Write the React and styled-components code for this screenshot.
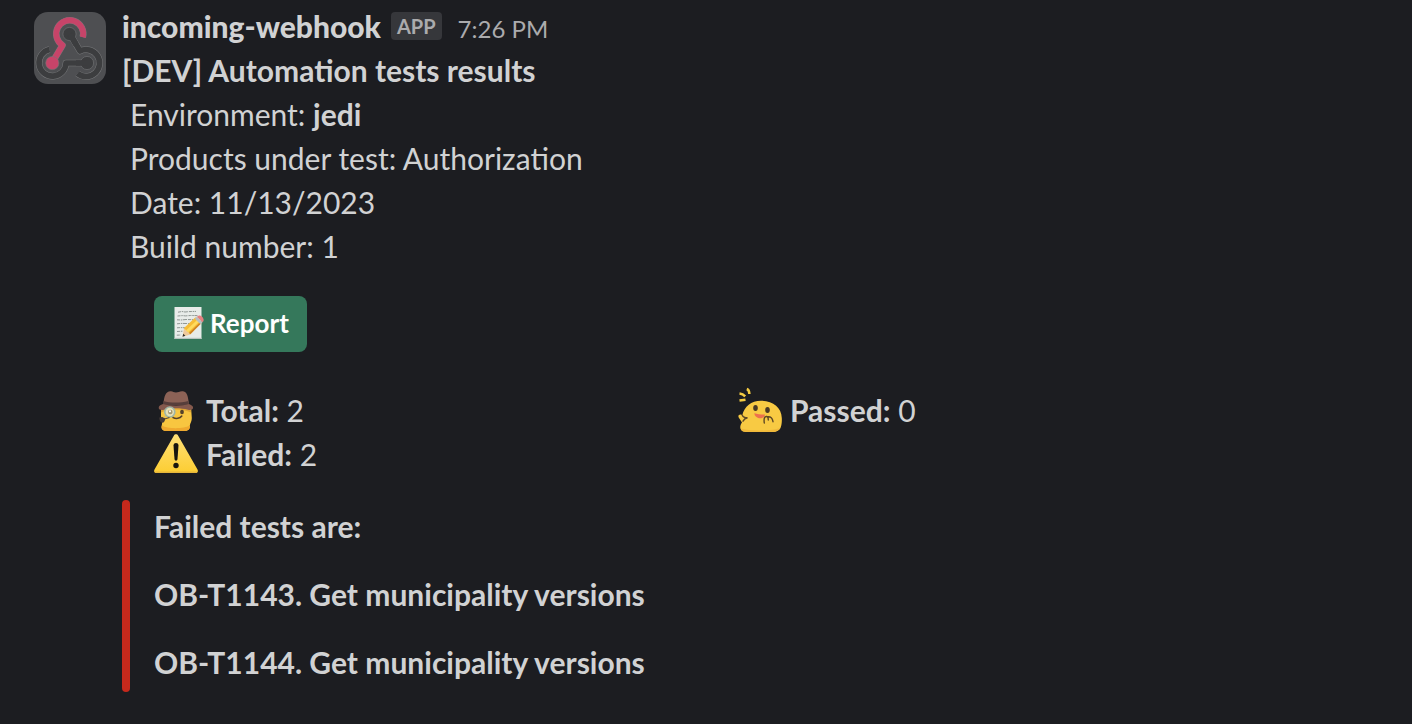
import React from "react";
import styled, { createGlobalStyle } from "styled-components";

const GlobalStyle = createGlobalStyle`
  *, *::before, *::after { box-sizing: border-box; }
  body {
    margin: 0;
    background: #1c1d21;
    color: #d1d2d3;
    font-family: Lato, "Liberation Sans", sans-serif;
    font-size: 30px;
    line-height: 44px;
  }
`;

const Message = styled.article`
  display: flex;
  gap: 16px;
  padding: 4px 40px 32px 34px;
`;

const Avatar = styled.svg`
  flex: none;
  width: 72px;
  height: 72px;
  margin-top: 8px;
`;

const Body = styled.div`
  flex: 1;
  min-width: 0;
`;

const Header = styled.header`
  display: flex;
  align-items: baseline;
  height: 44px;
`;

const Sender = styled.span`
  font-weight: 900;
`;

const AppBadge = styled.span`
  align-self: flex-start;
  margin: 8px 0 0 10px;
  padding: 0 6px;
  border-radius: 4px;
  background: #36373b;
  color: #ababad;
  font-size: 20px;
  font-weight: 700;
  line-height: 28px;
`;

const Time = styled.time`
  margin-left: 16px;
  color: #ababad;
  font-size: 24px;
`;

const Title = styled.h1`
  margin: 0;
  font-size: 30px;
  font-weight: 700;
  line-height: 44px;
`;

const Details = styled.div`
  padding-left: 8px;
`;

const Line = styled.p`
  margin: 0;
`;

const Blocks = styled.div`
  max-width: 1200px;
  padding: 28px 0 0 32px;
`;

const ReportButton = styled.button`
  display: flex;
  align-items: center;
  gap: 6px;
  height: 56px;
  padding: 0 18px 2px;
  border: 0;
  border-radius: 8px;
  background: #35785b;
  color: #fff;
  font: inherit;
  font-size: 26px;
  font-weight: 700;
`;

const MemoIcon = styled.svg`
  width: 32px;
  height: 32px;
`;

const Fields = styled.div`
  display: grid;
  grid-template-columns: 1fr 1fr;
  margin-top: 36px;
`;

const Field = styled.div`
  display: flex;
  gap: 8px;
`;

const Emoji = styled.svg`
  flex: none;
  width: 44px;
  height: 44px;
  margin: 2px 0 -2px;
  overflow: visible;
`;

const Attachment = styled.section`
  display: flex;
  gap: 24px;
  margin-top: 24px;
`;

const Bar = styled.div`
  width: 8px;
  border-radius: 8px;
  background: #c5291c;
`;

const Failures = styled.div`
  display: grid;
  gap: 24px;
  padding: 4px 0 8px;
  font-weight: 700;
`;

const RIGHT_ARM = "M36 22 L46 39 A13.5 13.5 0 1 1 43.5 61.5";
const LEFT_ARM = "M15.5 37.5 A13.5 13.5 0 1 0 32 51 L53 51";
const TOP_ARM = "M48.8 25.2 A13.5 13.5 0 1 0 28.5 33.2 L18 51";

function WebhookAvatar() {
  return (
    <Avatar viewBox="0 0 72 72" role="img" aria-label="incoming-webhook">
      <rect width="72" height="72" rx="14" fill="#4e4f52" />
      <g fill="none" strokeLinejoin="round">
        {[RIGHT_ARM, LEFT_ARM].map((d) => (
          <g key={d}>
            <path d={d} stroke="#77787a" strokeWidth="6.6" />
            <path d={d} stroke="#3c3d3f" strokeWidth="5.6" />
          </g>
        ))}
        <path d={TOP_ARM} stroke="#77787a" strokeWidth="6.6" />
        <path d={TOP_ARM} stroke="#c74469" strokeWidth="5.8" />
      </g>
      <g stroke="#747577" strokeWidth=".6">
        <circle cx="35.5" cy="22" r="6.6" fill="#3c3d3f" />
        <circle cx="53" cy="51" r="6.6" fill="#3c3d3f" />
        <circle cx="18.3" cy="51" r="6.6" fill="#c74469" />
      </g>
      <path d="M36 22 L42 32.5 M42 51 L53 51" stroke="#3c3d3f" strokeWidth="5.6" />
    </Avatar>
  );
}

function Memo() {
  return (
    <MemoIcon viewBox="0 0 32 32" aria-hidden="true">
      <path d="M2.5 0H29.5V32H2.5z" fill="#e8ece9" />
      <path d="M2.5 30.8H29.5V32H2.5z" fill="#b9c5bf" />
      <g fill="none" stroke="#858c89" strokeWidth=".9" strokeDasharray="3 .8 1.6 .6 4 1">
        <path d="M6 5.2l4-.7 3 .5 4-.4 7-.2" />
        <path d="M5.5 9l5-.4 3 .3 5-.4 7 .1" />
        <path d="M5 12.8l4 .2 5-.5 8 .2" />
        <path d="M5 16.8l5-.4 8 .2" />
        <path d="M5 20.8l4-.2 5 .2" />
        <path d="M5 24.5l6-.3M4.8 28.2l4-.2" />
      </g>
      <path d="M10.500 29.800l1.500-8.300 6.500 6z" fill="#efc99a" />
      <path d="M10.500 29.800l.7-3 2.200 2z" fill="#30302e" />
      <path d="M11.800 21.300L23.500 10.300l6 5.700-11.200 11.200z" fill="#f6bd36" />
      <path d="M14 23.400L25.800 12.300l2 2-11.600 11z" fill="#ffdb5c" />
      <path d="M17 26l11.400-11 1.100 1-11.200 11.200z" fill="#cf8322" />
      <path d="M22.800 11.700l2-1.900 5.700 5.500-2 1.900z" fill="#b8bec0" />
      <path d="M24.800 9.800l1.400-.9c2.500-1.500 6.500 2.500 5.200 5.400l-.9 1z" fill="#e48180" />
    </MemoIcon>
  );
}

function Detective() {
  return (
    <Emoji viewBox="0 0 44 44" aria-hidden="true">
      <path d="M7 16h30l.8 12c.2 3-1.600 5-2 7.500.5 3-1.500 5.500-5 5.500H13c-4 0-6.500-2-5.300-5.500C9 32 7 30 7 26z" fill="#f8c640" />
      <path d="M8 35.500c5 3.500 22 3.500 27.800 0 .8 3.200-1.500 5.500-5 5.500H13c-4 0-6-1.700-5-5.500z" fill="#efa92f" />
      <path d="M7 19C13 15.500 31 15.500 37 19v3.500C29 18.500 15 18.500 7 22.500z" fill="#dfa535" />
      <path d="M9.500 14C10 6 12 .8 17 1.300c2 .2 2.800 1.200 5 1.200s4-1.600 7-1.200c4.500.6 5 6 6 12.500z" fill="#8c6256" />
      <path d="M9.300 11c7 2 17 2 25 0l.8 4.500H9z" fill="#573e3b" />
      <path d="M9 14c7 2.300 19 2.300 26 0 3 1.200 4.600 2.800 4 4.200-.5 1.600-2.500 2-5 1.500-7-2-17-2-24 0-3 .7-5.300 0-5.300-2 0-1.500 1.700-2.800 4.300-3.700z" fill="#84594d" />
      <path d="M11.500 25l-2.500 6" stroke="#c9b77c" strokeWidth=".9" />
      <circle cx="15.800" cy="22" r="5" fill="#e5dfb5" stroke="#9fb5a7" strokeWidth="1.600" />
      <circle cx="16.300" cy="22" r="2.300" fill="#a49569" />
      <circle cx="16" cy="21.300" r="1.100" fill="#fff" />
      <ellipse cx="28" cy="22" rx="1.900" ry="2.300" fill="#54422b" />
      <path d="M19 27.500c3 1.700 7 1 8.800-1.500" fill="none" stroke="#54412a" strokeWidth="1.500" strokeLinecap="round" />
      <path d="M15.500 27.500L10.500 29" stroke="#5b4836" strokeWidth="1.200" />
      <path d="M5.300 27.500l3-.4 2.800 1.500c0 2.500-1.100 4.200-2.700 4.200-1.900-.1-3.100-2.200-3.100-5.300z" fill="#443936" />
    </Emoji>
  );
}

function Warning() {
  return (
    <Emoji viewBox="0 0 44 44" aria-hidden="true">
      <defs>
        <linearGradient id="sign" x1="0" y1="0" x2="0" y2="1">
          <stop offset="0" stopColor="#ffe077" />
          <stop offset="1" stopColor="#fccd32" />
        </linearGradient>
      </defs>
      <path d="M19.800 1.700c1-1.800 3.400-1.800 4.400 0L43.500 35.500c1 1.900.2 3.500-2 3.500h-39c-2.200 0-3-1.600-2-3.500z" fill="url(#sign)" />
      <path d="M.5 37.500h43c-.3 1-.9 1.500-2 1.500h-39c-1.100 0-1.700-.5-2-1.500z" fill="#e6b63a" />
      <path d="M19.500 11.500c0-3.300 5-3.300 5 0l-1 13.500c-.2 2.200-2.800 2.200-3 0z" fill="#17150e" />
      <circle cx="22" cy="31.500" r="2.700" fill="#17150e" />
    </Emoji>
  );
}

function Cheering() {
  return (
    <Emoji viewBox="0 2 44 44" aria-hidden="true">
      <path d="M3 41.500c-1.500-2-.5-5 1-7L.7 29.500C-.5 27 2 25.500 4.300 27 6.500 18.500 13 12.800 23 12.800c12-.2 20.500 7 20.800 17.200.2 4-.2 7-1.300 10-1 2.300-4 4-8 4H9c-3 0-5-.8-6-2.500z" fill="#f8ca43" />
      <path d="M2.800 40.500c9 2.800 30 2.600 39.500-.5-1.300 2.700-4.300 4-7.800 4H9c-3.500 0-6-.8-6.200-3.500z" fill="#f0b93b" />
      <ellipse cx="17.500" cy="20" rx="2.300" ry="2.900" fill="#493925" />
      <ellipse cx="29.500" cy="22" rx="2.300" ry="2.900" fill="#493925" />
      <path d="M16.300 25.300c3.500 1 7 1.300 10.700 1.200-.4 3-3 4.300-6 3.700-2.500-.5-4.400-2-4.700-4.900z" fill="#ed704d" />
      <path d="M26.300 35c-.7-4.500.3-7 2.500-6.500 1.500.4 1.500 2 1.500 3.500m-.5-3.200c2.800-.5 4.700 1.700 5.200 4.900M4.300 27.200c.6 1.800 3 2.600 5.200 2.600-2 .5-3.500 1.600-4.500 3.400" fill="none" stroke="#5f4825" strokeWidth="1.400" strokeLinecap="round" />
      <path d="M8.800 1c1.700.6 2.500 2.500 2.600 5M1.500 5.500c1.800.2 4 1 5.700 2.800M1.500 12.500l6-.8" fill="none" stroke="#f4cb42" strokeWidth="2.500" />
    </Emoji>
  );
}

export default function App() {
  return (
    <>
      <GlobalStyle />
      <Message>
        <WebhookAvatar />
        <Body>
          <Header>
            <Sender>incoming-webhook</Sender>
            <AppBadge>APP</AppBadge>
            <Time dateTime="19:26">7:26 PM</Time>
          </Header>
          <Title>[DEV] Automation tests results</Title>
          <Details>
            <Line>Environment: <b>jedi</b></Line>
            <Line>Products under test: Authorization</Line>
            <Line>Date: 11/13/2023</Line>
            <Line>Build number: 1</Line>
          </Details>
          <Blocks>
            <ReportButton type="button"><Memo />Report</ReportButton>
            <Fields>
              <Field><Detective /><span><b>Total:</b> 2</span></Field>
              <Field><Cheering /><span><b>Passed:</b> 0</span></Field>
              <Field><Warning /><span><b>Failed:</b> 2</span></Field>
            </Fields>
          </Blocks>
          <Attachment>
            <Bar />
            <Failures>
              <Line>Failed tests are:</Line>
              <Line>OB-T1143. Get municipality versions</Line>
              <Line>OB-T1144. Get municipality versions</Line>
            </Failures>
          </Attachment>
        </Body>
      </Message>
    </>
  );
}
